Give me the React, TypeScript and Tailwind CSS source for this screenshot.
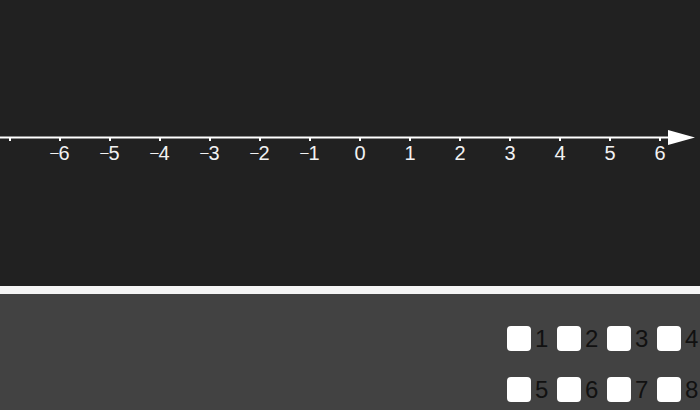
const TICKS = Array.from({ length: 14 }, (_, i) => i - 7); // -7 .. 6
const BOXES = [
  [1, 2, 3, 4],
  [5, 6, 7, 8],
];

function NumberLine() {
  return (
    <svg width={700} height={286} className="block" style={{ fontFamily: '"Liberation Sans", Arial, sans-serif' }}>
      <line x1={0} y1={137.5} x2={670} y2={137.5} stroke="#fff" strokeWidth={2} />
      <polygon points="668,130 695,137.5 668,145" fill="#fff" />
      {TICKS.map((n) => {
        const x = 360 + n * 50;
        return (
          <g key={n}>
            <rect x={x - 1} y={138} width={2} height={3} fill="#fff" />
            {n >= -6 && (
              <text x={x} y={160} textAnchor="middle" fontSize={20} fill="#f2f2f2">
                {n < 0 && (
                  <tspan fontSize={15} dy={-3}>
                    {"\u2013"}
                  </tspan>
                )}
                <tspan dy={n < 0 ? 3 : 0}>{Math.abs(n)}</tspan>
              </text>
            )}
          </g>
        );
      })}
    </svg>
  );
}

export default function App() {
  return (
    <div className="w-[700px] h-[410px] overflow-hidden flex flex-col bg-[#424242] font-['Liberation_Sans',Arial,sans-serif]">
      <div className="h-[286px] shrink-0 bg-[#212121]">
        <NumberLine />
      </div>
      <div className="h-[8px] shrink-0 bg-[#f5f5f5]" />
      <div className="flex-1 pt-[32px] pl-[507px] flex flex-col gap-[26px]">
        {BOXES.map((row, r) => (
          <div key={r} className="flex">
            {row.map((n) => (
              <label key={n} className="w-[50px] shrink-0 flex items-center gap-[4px]">
                <span className="w-6 h-[25px] rounded-[4px] bg-white shrink-0" />
                <span className="text-[24px] leading-none text-[#111]">{n}</span>
              </label>
            ))}
          </div>
        ))}
      </div>
    </div>
  );
}
